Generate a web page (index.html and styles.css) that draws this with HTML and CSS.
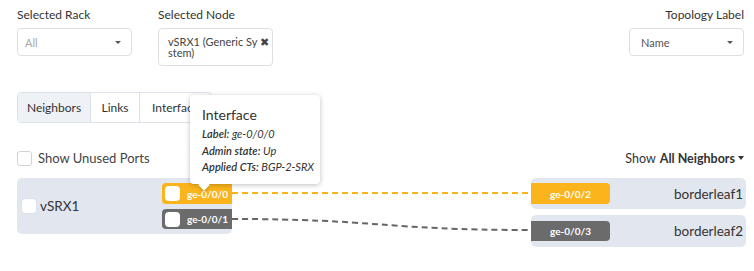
FILE: index.html
```html
<!DOCTYPE html>
<html>
<head>
<meta charset="utf-8">
<link rel="stylesheet" href="styles.css">
</head>
<body>
<div class="page">
  <div class="top-row">
    <div class="field-group">
      <div class="field">
        <div class="field-label">Selected Rack</div>
        <div class="select select-rack">
          <span class="placeholder">All</span>
          <span class="caret"></span>
        </div>
      </div>
      <div class="field">
        <div class="field-label">Selected Node</div>
        <div class="select select-node">
          <span class="node-value">vSRX1 (Generic System)</span>
          <span class="clear">✖</span>
        </div>
      </div>
    </div>
    <div class="field field-right">
      <div class="field-label">Topology Label</div>
      <div class="select select-topo">
        <span class="value">Name</span>
        <span class="caret"></span>
      </div>
    </div>
  </div>

  <div class="tabs-wrap">
    <div class="tabs">
      <div class="tab tab-active">Neighbors</div>
      <div class="tab tab-links">Links</div>
      <div class="tab tab-last">Interfaces</div>
    </div>
    <div class="tooltip">
      <div class="tt-title">Interface</div>
      <div class="tt-line"><b>Label:</b> ge-0/0/0</div>
      <div class="tt-line"><b>Admin state:</b> Up</div>
      <div class="tt-line"><b>Applied CTs:</b> BGP-2-SRX</div>
    </div>
  </div>

  <div class="options-row">
    <label class="check-label"><span class="checkbox"></span>Show Unused Ports</label>
    <div class="show-menu">Show <b>All Neighbors</b><span class="caret-dark"></span></div>
  </div>

  <div class="diagram">
    <svg class="links" width="754" height="80" viewBox="0 0 754 80">
      <line x1="232" y1="15" x2="531" y2="15" stroke="#fbb41c" stroke-width="2" stroke-dasharray="6 4"/>
      <path d="M232 41 C 380 41, 380 52, 531 52" fill="none" stroke="#666" stroke-width="2" stroke-dasharray="6 4"/>
    </svg>
    <div class="left-col">
      <div class="node-card node-left">
        <span class="checkbox cb-card"></span>
        <span class="node-name">vSRX1</span>
        <div class="ports">
          <div class="port port-orange"><span class="checkbox cb-port"></span><span class="port-text">ge-0/0/0</span></div>
          <div class="port port-gray"><span class="checkbox cb-port"></span><span class="port-text">ge-0/0/1</span></div>
        </div>
      </div>
    </div>
    <div class="right-col">
      <div class="node-card node-right nr1">
        <div class="rport port-orange">ge-0/0/2</div>
        <span class="node-name">borderleaf1</span>
      </div>
      <div class="node-card node-right nr2">
        <div class="rport port-gray">ge-0/0/3</div>
        <span class="node-name">borderleaf2</span>
      </div>
    </div>
  </div>
</div>
</body>
</html>
```

FILE: styles.css
```css
* { box-sizing: border-box; }
html, body { margin: 0; padding: 0; background: #fff; }
body {
  font-family: Lato, "Open Sans", "Liberation Sans", sans-serif;
  color: #333;
  width: 754px;
  height: 271px;
  overflow: hidden;
}
.page { padding: 7px 10px 0 17px; }

.top-row { display: flex; justify-content: space-between; align-items: flex-start; }
.field-group { display: flex; gap: 26px; }
.field { display: flex; flex-direction: column; }
.field-right { align-items: flex-end; }
.field-label { font-size: 12px; line-height: 16px; margin-bottom: 5px; color: #333; }

.select {
  border: 1px solid #dcdfe4;
  border-radius: 4px;
  background: #fff;
  display: flex;
  align-items: center;
  font-size: 11px;
  position: relative;
}
.select-rack { width: 115px; height: 28px; padding: 0 10px 0 7px; justify-content: space-between; }
.select-topo { width: 115px; height: 28px; padding: 0 10px 0 11px; justify-content: space-between; }
.select-node { width: 115px; height: 38px; padding: 0 6px 0 9px; align-items: center; justify-content: space-between; }
.placeholder { color: #a8a8a8; }
.value { color: #555; }
.node-value { width: 92px; flex: none; line-height: 11px; color: #444; font-size: 11px; word-break: break-all; }
.clear { font-size: 11px; color: #444; align-self: flex-start; margin-top: 6px; }
.caret {
  width: 0; height: 0;
  border-left: 3px solid transparent;
  border-right: 3px solid transparent;
  border-top: 3px solid #555;
}

.tabs-wrap { position: relative; margin-top: 26px; }
.tabs {
  display: inline-flex;
  border: 1px solid #dde2ea;
  border-radius: 4px;
  height: 31px;
  overflow: hidden;
}
.tab { font-size: 12px; line-height: 29px; color: #333; border-right: 1px solid #dde2ea; text-align: center; white-space: nowrap; overflow: hidden; }
.tab-active { background: #eef2f7; width: 73px; }
.tab-links { width: 49px; }
.tab-last { border-right: none; width: 71px; padding-left: 12px; text-align: left; }

.tooltip {
  position: absolute;
  left: 173px;
  top: 3px;
  width: 130px;
  height: 89px;
  background: #fff;
  border-radius: 4px;
  box-shadow: 0 1px 5px rgba(0,0,0,0.25);
  padding: 10px 0 0 12px;
  z-index: 5;
}
.tooltip::after {
  content: "";
  position: absolute;
  left: 10px;
  bottom: -5px;
  width: 8px; height: 8px;
  background: #fff;
  transform: rotate(45deg);
  box-shadow: 2px 2px 2px rgba(0,0,0,0.12);
}
.tt-title { font-size: 14px; line-height: 20px; color: #333; margin-bottom: 1px; }
.tt-line { font-size: 11px; line-height: 16.5px; font-style: italic; color: #333; }
.tt-line b { font-weight: 600; }

.options-row { display: flex; justify-content: space-between; align-items: center; margin-top: 25px; height: 20px; }
.check-label { display: flex; align-items: center; font-size: 13px; color: #444; }
.checkbox {
  display: inline-block;
  width: 15px; height: 15px;
  border: 1px solid #d0d4da;
  border-radius: 3px;
  background: #fff;
}
.check-label .checkbox { margin-right: 6px; }
.show-menu { font-size: 12.5px; color: #333; display: flex; align-items: center; margin-right: 0; }
.show-menu b { font-weight: 700; margin-left: 4px; color: #333; }
.caret-dark {
  width: 0; height: 0; margin-left: 3px;
  border-left: 3.5px solid transparent;
  border-right: 3.5px solid transparent;
  border-top: 4px solid #333;
}

.diagram { position: relative; display: flex; justify-content: space-between; margin-top: 10px; margin-right: -2px; }
.links { position: absolute; left: -17px; top: 0; z-index: 0; }
.node-card { background: #e2e6ee; border-radius: 5px; position: relative; z-index: 1; }
.node-left { width: 215px; height: 56px; display: flex; align-items: center; padding-left: 5px; }
.cb-card { width: 14px; height: 14px; border: none; margin-right: 4px; box-shadow: 0 0 1px rgba(0,0,0,0.2); }
.node-name { font-size: 13.5px; color: #333; }
.node-left .node-name { flex: 1; }
.ports { display: flex; flex-direction: column; gap: 5px; align-self: center; }
.port {
  width: 70px; height: 21px;
  border-radius: 4px 0 0 4px;
  display: flex; align-items: center;
  padding-left: 3px;
}
.port-gray { height: 20px; }
.port-orange { background: #fbb41c; }
.port-gray { background: #6b6b6b; }
.cb-port { width: 15px; height: 15px; border: none; border-radius: 4px; }
.port-text { color: #fff; font-size: 10px; font-weight: 700; margin-left: 7px; }

.right-col { display: flex; flex-direction: column; gap: 6px; }
.node-right { width: 215px; display: flex; align-items: center; justify-content: space-between; padding-right: 3px; }
.nr1 { height: 31px; }
.nr2 { height: 32px; }
.rport {
  width: 79px; height: 21px;
  border-radius: 0 4px 4px 0;
  color: #fff; font-size: 10px; font-weight: 700;
  display: flex; align-items: center; justify-content: center;
}
.nr2 .rport { height: 20px; }
```
